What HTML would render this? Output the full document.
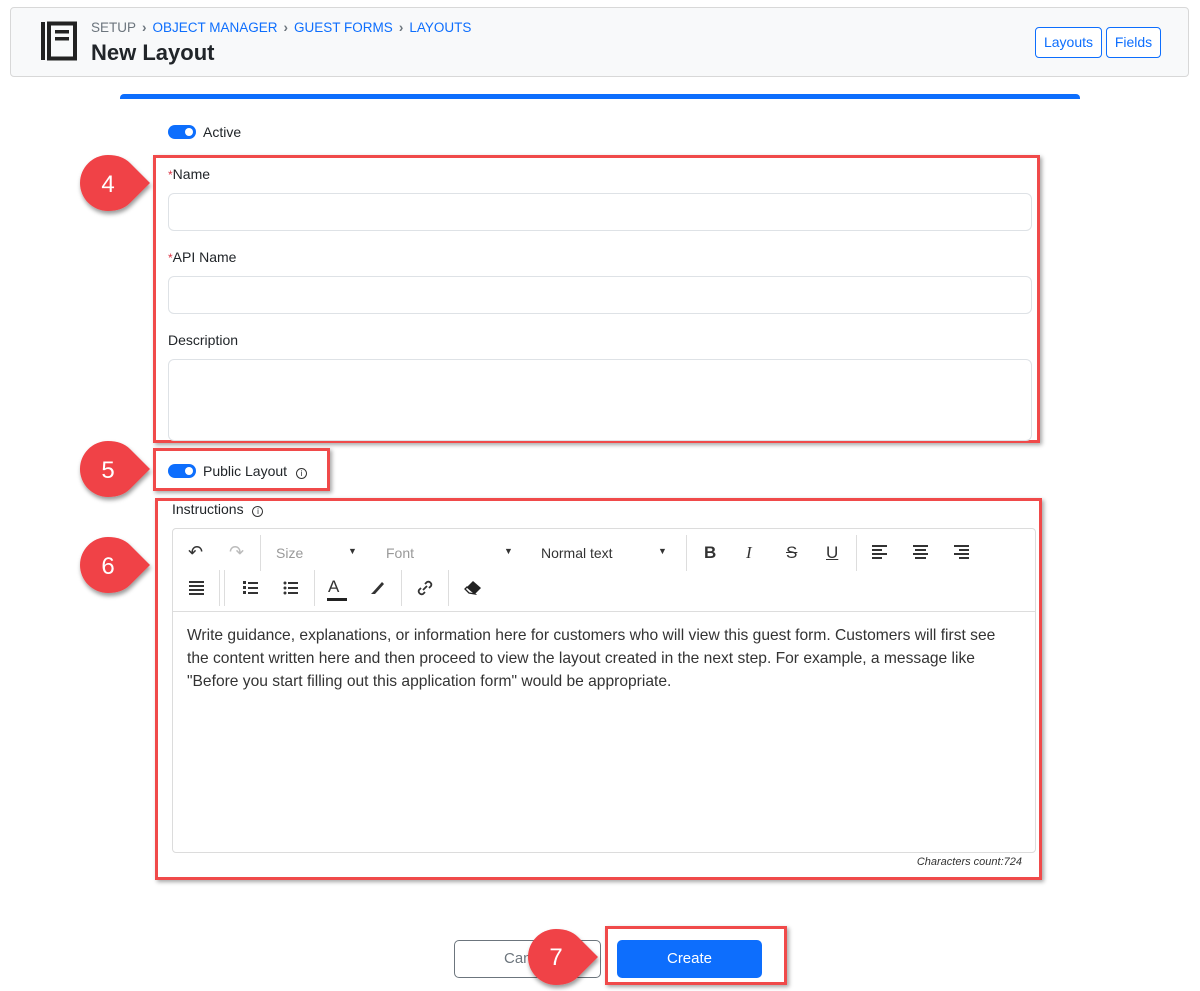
<!DOCTYPE html>
<html><head><style>
*{box-sizing:border-box;margin:0;padding:0}
body{width:1200px;height:991px;background:#fff;font-family:"Liberation Sans",sans-serif;position:relative;overflow:hidden;color:#212529}
.a{position:absolute}
.hdr{left:10px;top:7px;width:1179px;height:70px;background:#f8f9fa;border:1px solid #d8d8d8;border-radius:4px}
.crumb{left:91px;top:20px;font-size:13.5px;color:#6c757d}
.crumb b{font-weight:normal;color:#0d6efd}
.crumb i{font-style:normal;color:#6c757d;margin:0 6px;font-weight:bold}
.title{left:91px;top:40px;font-size:22px;color:#212529;font-weight:bold}
.ob{top:27px;height:31px;border:1px solid #0d6efd;border-radius:4px;color:#0d6efd;font-size:14px;line-height:29px;text-align:center;background:#fff}
.bar{left:120px;top:94px;width:960px;height:5px;background:#0d6efd;border-radius:4px 4px 0 0}
.tg{width:28px;height:14px;background:#0d6efd;border-radius:7px}
.tg:after{content:"";position:absolute;right:3px;top:3px;width:8px;height:8px;border-radius:50%;background:#fff}
.lbl{font-size:14px;color:#212529}
.req{color:#dc3545;font-size:12px}
.inp{left:168px;width:864px;border:1px solid #dee2e6;border-radius:6px;background:#fff}
.rb{border:3px solid #f04a4a;box-shadow:2px 2px 4px rgba(0,0,0,.35)}
.ed{left:172px;top:528px;width:864px;height:325px;border:1px solid #dcdcdc;border-radius:4px}
.tb{font-size:14px;color:#333}
.sep{width:1px;background:#ddd}
.txt{left:187px;top:624px;width:845px;line-height:23px;color:#333;font-family:"Liberation Sans",sans-serif;font-size:15.6px;white-space:nowrap}
</style></head><body>
<div class="a hdr"></div>
<svg class="a" style="left:40px;top:21px" width="38" height="40" viewBox="0 0 38 40"><rect x="1" y="1" width="4" height="38" fill="#222"/><rect x="9" y="2.5" width="26" height="35" fill="none" stroke="#222" stroke-width="4"/><rect x="15" y="9" width="14" height="3.5" fill="#222"/><rect x="15" y="16" width="14" height="3.5" fill="#222"/></svg>
<div class="a crumb">SETUP<i>›</i><b>OBJECT MANAGER</b><i>›</i><b>GUEST FORMS</b><i>›</i><b>LAYOUTS</b></div>
<div class="a title">New Layout</div>
<div class="a ob" style="left:1035px;width:67px">Layouts</div>
<div class="a ob" style="left:1106px;width:55px">Fields</div>
<div class="a bar"></div>

<div class="a tg" style="left:168px;top:125px"></div>
<div class="a lbl" style="left:203px;top:124px">Active</div>

<div class="a rb" style="left:153px;top:155px;width:887px;height:288px"></div>
<div class="a lbl" style="left:168px;top:166px"><span class="req">*</span>Name</div>
<div class="a inp" style="top:193px;height:38px"></div>
<div class="a lbl" style="left:168px;top:249px"><span class="req">*</span>API Name</div>
<div class="a inp" style="top:276px;height:38px"></div>
<div class="a lbl" style="left:168px;top:332px">Description</div>
<div class="a inp" style="top:359px;height:82px"></div>

<div class="a rb" style="left:153px;top:448px;width:177px;height:43px"></div>
<div class="a tg" style="left:168px;top:464px"></div>
<div class="a lbl" style="left:203px;top:463px">Public Layout <span style="border:1px solid #333;border-radius:50%;display:inline-block;width:11px;height:11px;line-height:9px;text-align:center;margin-left:5px;font-size:8px">i</span></div>

<div class="a rb" style="left:155px;top:498px;width:887px;height:382px"></div>
<div class="a lbl" style="left:172px;top:501px">Instructions <span style="border:1px solid #333;border-radius:50%;display:inline-block;width:11px;height:11px;line-height:9px;text-align:center;margin-left:5px;font-size:8px">i</span></div>
<div class="a ed"></div>
<div class="a" style="left:173px;top:611px;width:862px;height:1px;background:#ddd"></div>
<div class="a tb" style="left:188px;top:542px;font-size:18px">↶</div>
<div class="a tb" style="left:229px;top:542px;font-size:18px;color:#bbb">↷</div>
<div class="a sep" style="left:260px;top:535px;height:36px"></div>
<div class="a tb" style="left:276px;top:545px;color:#999">Size</div>
<div class="a tb" style="left:348px;top:546px;font-size:9px">▼</div>
<div class="a tb" style="left:386px;top:545px;color:#999">Font</div>
<div class="a tb" style="left:504px;top:546px;font-size:9px">▼</div>
<div class="a tb" style="left:541px;top:545px">Normal text</div>
<div class="a tb" style="left:658px;top:546px;font-size:9px">▼</div>
<div class="a sep" style="left:686px;top:535px;height:36px"></div>
<div class="a tb" style="left:704px;top:543px;font-size:17px;font-weight:bold">B</div>
<div class="a tb" style="left:746px;top:543px;font-size:17px;font-style:italic;font-family:'Liberation Serif',serif">I</div>
<div class="a tb" style="left:786px;top:543px;font-size:17px;text-decoration:line-through">S</div>
<div class="a tb" style="left:826px;top:543px;font-size:17px;text-decoration:underline">U</div>
<div class="a sep" style="left:856px;top:535px;height:36px"></div>
<svg class="a" style="left:872px;top:545px" width="100" height="14"><g fill="#333"><rect x="0" y="0" width="15" height="2"/><rect x="0" y="4" width="10" height="2"/><rect x="0" y="8" width="15" height="2"/><rect x="0" y="12" width="10" height="2"/><rect x="41" y="0" width="15" height="2"/><rect x="43" y="4" width="11" height="2"/><rect x="41" y="8" width="15" height="2"/><rect x="43" y="12" width="11" height="2"/><rect x="82" y="0" width="15" height="2"/><rect x="87" y="4" width="10" height="2"/><rect x="82" y="8" width="15" height="2"/><rect x="87" y="12" width="10" height="2"/></g></svg>
<svg class="a" style="left:189px;top:581px" width="15" height="14"><g fill="#333"><rect y="0" width="15" height="2"/><rect y="4" width="15" height="2"/><rect y="8" width="15" height="2"/><rect y="12" width="15" height="2"/></g></svg>
<div class="a sep" style="left:219px;top:570px;height:36px"></div>
<div class="a sep" style="left:224px;top:570px;height:36px"></div>
<svg class="a" style="left:243px;top:580px" width="60" height="16"><g fill="#333"><rect x="5" y="2" width="10" height="2"/><rect x="5" y="7" width="10" height="2"/><rect x="5" y="12" width="10" height="2"/><rect x="0" y="1" width="3" height="3"/><rect x="0" y="6" width="3" height="3"/><rect x="0" y="11" width="3" height="3"/><circle cx="42" cy="3" r="1.5"/><circle cx="42" cy="8" r="1.5"/><circle cx="42" cy="13" r="1.5"/><rect x="45" y="2" width="10" height="2"/><rect x="45" y="7" width="10" height="2"/><rect x="45" y="12" width="10" height="2"/></g></svg>
<div class="a sep" style="left:314px;top:570px;height:36px"></div>
<div class="a tb" style="left:328px;top:577px;font-size:17px">A</div>
<div class="a" style="left:327px;top:598px;width:20px;height:3px;background:#222"></div>
<svg class="a" style="left:370px;top:579px" width="16" height="16"><path d="M3 13 L12 3 L14 5 L5 15 Z M1 15 L3 13 L5 15 Z" fill="#333"/></svg>
<div class="a sep" style="left:401px;top:570px;height:36px"></div>
<svg class="a" style="left:417px;top:580px" width="16" height="16"><path d="M6 10 L10 6 M4 8 L2 10 a3 3 0 0 0 4 4 L8 12 M8 4 L10 2 a3 3 0 0 1 4 4 L12 8" stroke="#333" stroke-width="1.8" fill="none"/></svg>
<div class="a sep" style="left:448px;top:570px;height:36px"></div>
<svg class="a" style="left:464px;top:580px" width="18" height="16"><path d="M9 1 L17 8 L11 14 L3 7 Z" fill="#222"/><path d="M3 7 L1 9 L5 13 L11 14 Z" fill="#fff" stroke="#222" stroke-width="1.3"/></svg>
<div class="a txt">Write guidance, explanations, or information here for customers who will view this guest form. Customers will first see<br>the content written here and then proceed to view the layout created in the next step. For example, a message like<br>"Before you start filling out this application form" would be appropriate.</div>
<div class="a" style="left:880px;top:856px;width:142px;text-align:right;font-size:11px;font-style:italic;color:#333">Characters count:724</div>

<div class="a" style="left:454px;top:940px;width:147px;height:38px;border:1px solid #6c757d;border-radius:5px;font-size:15px;color:#6c757d;line-height:36px;padding-left:49px">Cancel</div>
<div class="a rb" style="left:605px;top:926px;width:182px;height:59px"></div>
<div class="a" style="left:617px;top:940px;width:145px;height:38px;background:#0d6efd;border-radius:5px;color:#fff;font-size:15px;line-height:38px;text-align:center">Create</div>

<svg class="a" style="left:0;top:0" width="1200" height="991">
<defs><filter id="s"><feDropShadow dx="1" dy="3" stdDeviation="2" flood-opacity=".4"/></filter></defs>
<g fill="#f04246" filter="url(#s)">
<path d="M108 155 a28 28 0 1 0 0 56 q14 0 22-8 l20 -20 l-20 -20 q-8 -8 -22 -8z"/>
<path d="M108 441 a28 28 0 1 0 0 56 q14 0 22-8 l20 -20 l-20 -20 q-8 -8 -22 -8z"/>
<path d="M108 537 a28 28 0 1 0 0 56 q14 0 22-8 l20 -20 l-20 -20 q-8 -8 -22 -8z"/>
<path d="M556 929 a28 28 0 1 0 0 56 q14 0 22-8 l20 -20 l-20 -20 q-8 -8 -22 -8z"/>
</g>
<g fill="#fff" font-family="Liberation Sans,sans-serif" font-size="24" text-anchor="middle">
<text x="108" y="192">4</text><text x="108" y="478">5</text><text x="108" y="574">6</text><text x="556" y="965">7</text>
</g></svg>
</body></html>
